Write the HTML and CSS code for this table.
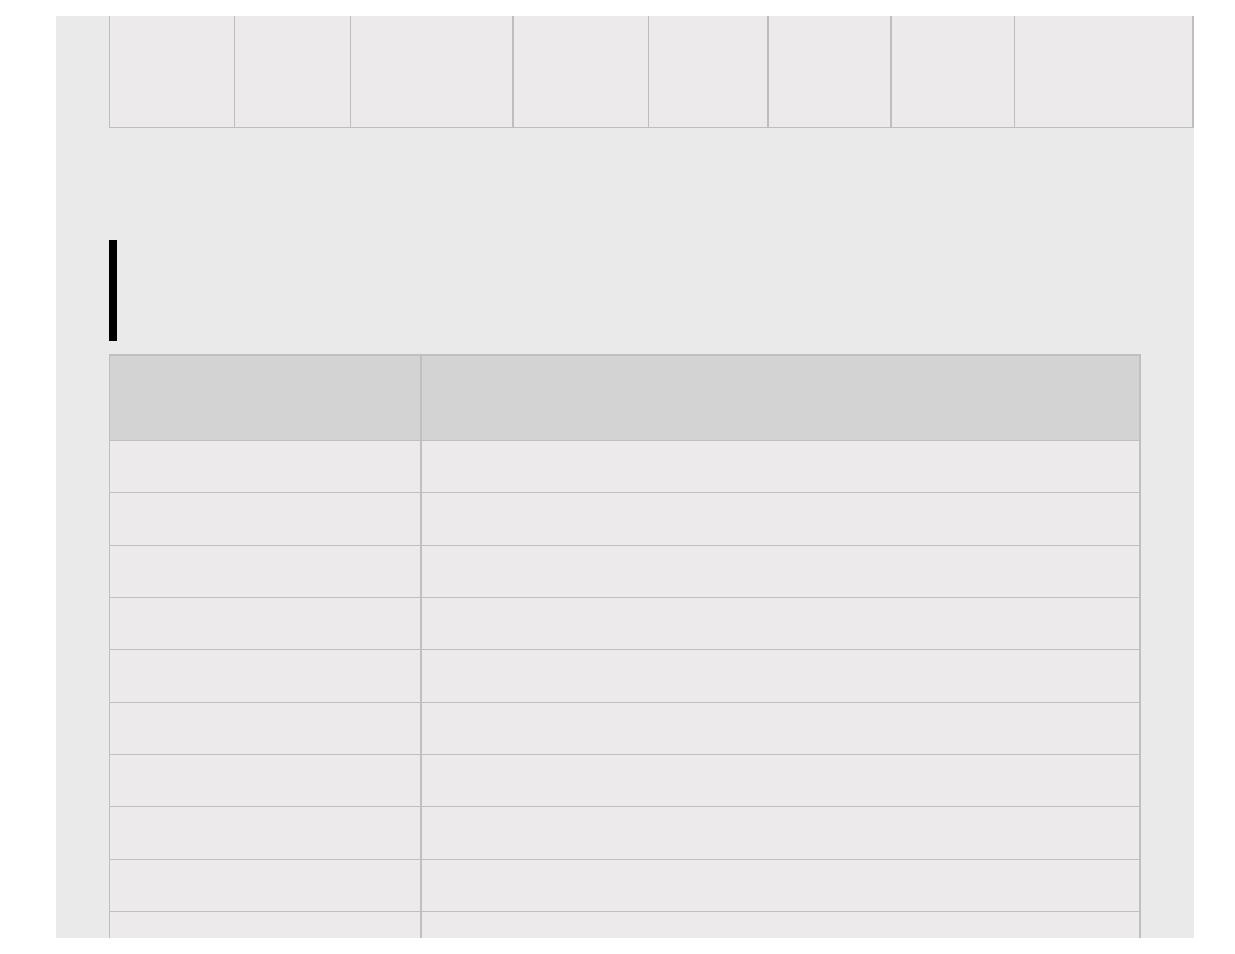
FILE: index.html
```html
<!DOCTYPE html>
<html lang="en">
<head>
<meta charset="utf-8">
<title>Page</title>
<link rel="stylesheet" href="styles.css">
</head>
<body>
<div class="panel">
  <div class="strip">
    <div class="strip-cell"></div>
    <div class="strip-cell"></div>
    <div class="strip-cell thick"></div>
    <div class="strip-cell"></div>
    <div class="strip-cell thick"></div>
    <div class="strip-cell thick"></div>
    <div class="strip-cell"></div>
    <div class="strip-cell thick"></div>
  </div>
  <div class="heading"></div>
  <div class="grid-table">
    <div class="row head"><div class="cell key"></div><div class="cell val"></div></div>
    <div class="row"><div class="cell key"></div><div class="cell val"></div></div>
    <div class="row"><div class="cell key"></div><div class="cell val"></div></div>
    <div class="row"><div class="cell key"></div><div class="cell val"></div></div>
    <div class="row"><div class="cell key"></div><div class="cell val"></div></div>
    <div class="row"><div class="cell key"></div><div class="cell val"></div></div>
    <div class="row"><div class="cell key"></div><div class="cell val"></div></div>
    <div class="row"><div class="cell key"></div><div class="cell val"></div></div>
    <div class="row"><div class="cell key"></div><div class="cell val"></div></div>
    <div class="row"><div class="cell key"></div><div class="cell val"></div></div>
    <div class="row"><div class="cell key"></div><div class="cell val"></div></div>
    <div class="row"><div class="cell key"></div><div class="cell val"></div></div>
  </div>
</div>
</body>
</html>
```
FILE: styles.css
```css
html, body {
  margin: 0;
  padding: 0;
  background: #ffffff;
  font-family: "Liberation Sans", Arial, sans-serif;
}

.panel {
  box-sizing: border-box;
  margin: 16px 41px 0 56px;
  height: 922px;
  overflow: hidden;
  background: #eaeaea;
  padding-left: 53px;
}

.strip {
  display: grid;
  grid-template-columns: 125px 116px 163px 135px 120px 123px 123px 179px;
  width: max-content;
  border-left: 1px solid #bfbebf;
  border-bottom: 1px solid #bfbebf;
}

.strip-cell {
  box-sizing: border-box;
  height: 111px;
  background: #eceaeb;
  border-right: 1px solid #bfbebf;
}

.strip-cell.thick {
  border-right-width: 2px;
}

.heading {
  width: 8px;
  height: 101px;
  background: #000000;
  margin-top: 112px;
  margin-bottom: 13px;
}

.grid-table {
  box-sizing: border-box;
  width: 1032px;
  border-top: 2px solid #c0bfc0;
  border-left: 1px solid #c0bfc0;
  border-right: 2px solid #c0bfc0;
}

.row {
  box-sizing: border-box;
  display: grid;
  grid-template-columns: 312px 1fr;
  height: 52.33px;
  border-bottom: 1px solid #c0bfc0;
  background: #eceaeb;
}

.row.head {
  height: 85px;
  background: #d3d3d3;
}

.cell.key {
  border-right: 2px solid #c0bfc0;
}
```
